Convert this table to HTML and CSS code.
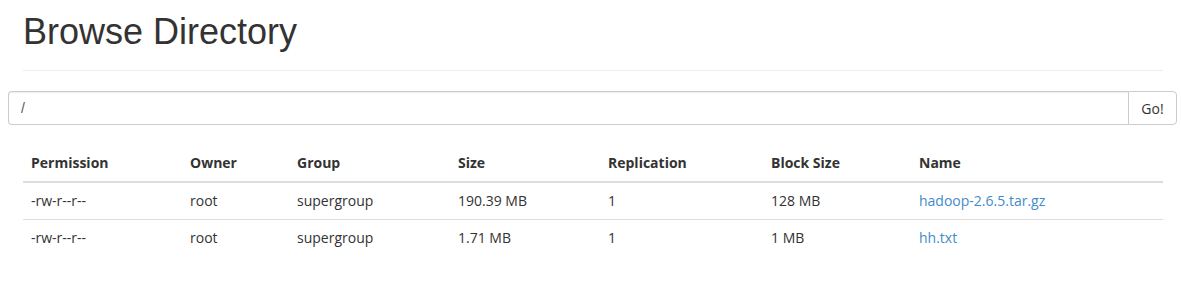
FILE: index.html
```html
<!DOCTYPE html>
<html>
<head>
<meta charset="utf-8">
<link rel="stylesheet" href="styles.css">
</head>
<body>
<div class="header-wrap">
  <div class="page-header">
    <h1>Browse Directory</h1>
  </div>
</div>
<div class="path-bar">
  <input class="path-input" type="text" value="/">
  <button class="go-btn" type="button">Go!</button>
</div>
<div class="table-wrap">
  <table class="listing">
    <colgroup>
      <col class="c-perm"><col class="c-owner"><col class="c-group"><col class="c-size"><col class="c-repl"><col class="c-block"><col class="c-name">
    </colgroup>
    <thead>
      <tr><th>Permission</th><th>Owner</th><th>Group</th><th>Size</th><th>Replication</th><th>Block Size</th><th>Name</th></tr>
    </thead>
    <tbody>
      <tr><td>-rw-r--r--</td><td>root</td><td>supergroup</td><td>190.39 MB</td><td>1</td><td>128 MB</td><td><a href="#">hadoop-2.6.5.tar.gz</a></td></tr>
      <tr><td>-rw-r--r--</td><td>root</td><td>supergroup</td><td>1.71 MB</td><td>1</td><td>1 MB</td><td><a href="#">hh.txt</a></td></tr>
    </tbody>
  </table>
</div>
</body>
</html>
```
FILE: styles.css
```css
* { box-sizing: border-box; }
html, body { margin: 0; padding: 0; background: #fff; }
body {
  font-family: "Open Sans", "Noto Sans", sans-serif;
  font-size: 14px;
  line-height: 20px;
  color: #333;
}
.header-wrap { padding: 0 18px 0 23px; }
.page-header {
  width: 1140px;
  padding-bottom: 18px;
  border-bottom: 1px solid #eee;
  margin-bottom: 20px;
}
.page-header h1 {
  margin: 0;
  padding-top: 12px;
  font-family: "Liberation Sans", Arial, sans-serif;
  font-size: 36px;
  font-weight: normal;
  line-height: 40px;
  color: #333;
}
.path-bar {
  display: flex;
  margin: 0 4px 0 8px;
  height: 34px;
}
.path-input {
  flex: 1;
  height: 34px;
  border: 1px solid #ccc;
  border-right: none;
  border-radius: 4px 0 0 4px;
  padding: 6px 12px;
  font-family: "Liberation Sans", Arial, sans-serif;
  font-size: 14px;
  color: #555;
  outline: none;
  box-shadow: inset 0 1px 1px rgba(0,0,0,.075);
}
.go-btn {
  width: 49px;
  height: 34px;
  border: 1px solid #ccc;
  border-radius: 0 4px 4px 0;
  background: #fff;
  font-family: "Open Sans", "Noto Sans", sans-serif;
  font-size: 14px;
  color: #333;
  padding: 0;
}
.table-wrap { padding: 20px 18px 0 23px; }
.listing {
  width: 1140px;
  border-collapse: collapse;
  border-spacing: 0;
  table-layout: fixed;
}
.c-perm { width: 159px; }
.c-owner { width: 107px; }
.c-group { width: 161px; }
.c-size { width: 150px; }
.c-repl { width: 163px; }
.c-block { width: 148px; }
.c-name { width: 252px; }
.listing th, .listing td {
  text-align: left;
  padding: 8px;
  line-height: 20px;
  white-space: nowrap;
}
.listing th {
  font-weight: bold;
  border-bottom: 2px solid #ddd;
}
.listing tbody tr + tr td { border-top: 1px solid #ddd; }
.listing a { color: #428bca; text-decoration: none; }
```
